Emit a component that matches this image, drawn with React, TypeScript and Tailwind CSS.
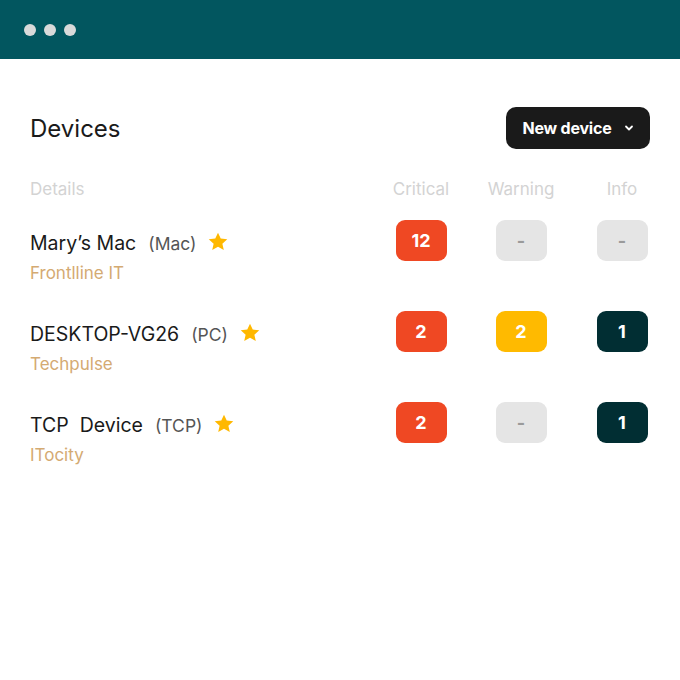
import React from "react";

type Cell = { v: string; kind: "red" | "yellow" | "dark" | "empty" };

const rows: { name: string; type: string; company: string; cells: Cell[] }[] = [
  {
    name: "Mary’s Mac",
    type: "(Mac)",
    company: "Frontlline IT",
    cells: [
      { v: "12", kind: "red" },
      { v: "-", kind: "empty" },
      { v: "-", kind: "empty" },
    ],
  },
  {
    name: "DESKTOP-VG26",
    type: "(PC)",
    company: "Techpulse",
    cells: [
      { v: "2", kind: "red" },
      { v: "2", kind: "yellow" },
      { v: "1", kind: "dark" },
    ],
  },
  {
    name: "TCP  Device",
    type: "(TCP)",
    company: "ITocity",
    cells: [
      { v: "2", kind: "red" },
      { v: "-", kind: "empty" },
      { v: "1", kind: "dark" },
    ],
  },
];

const colW = ["w-[98px]", "w-[102px]", "w-[100px]"];

function Badge({ c }: { c: Cell }) {
  const cls =
    c.kind === "red"
      ? "bg-[#EF4823] text-white"
      : c.kind === "yellow"
      ? "bg-[#FFBA00] text-white"
      : c.kind === "dark"
      ? "bg-[#012E33] text-white"
      : "bg-[#E5E5E5] text-[#9a9a9a]";
  return (
    <div
      className={`w-[51px] h-[41px] rounded-[9px] flex items-center justify-center text-[18px] font-bold ${cls}`}
    >
      {c.v}
    </div>
  );
}

function Star() {
  return (
    <svg width="20" height="19" viewBox="0 0 24 23" className="ml-[12px] mb-[3px]">
      <path
        d="M12 0.8l3.3 7.2 7.9 0.8-5.9 5.3 1.7 7.8L12 17.9l-7 4 1.7-7.8L0.8 8.8l7.9-0.8z"
        fill="#FFB800"
      />
    </svg>
  );
}

export default function App() {
  return (
    <div
      className="w-[680px] h-[680px] bg-white overflow-hidden"
      style={{ fontFamily: "Inter, 'Noto Sans', sans-serif" }}
    >
      <div className="h-[59px] bg-[#02565F] flex items-center pl-[24px] gap-[8px]">
        <div className="w-[12px] h-[12px] rounded-full bg-[#DADADA]" />
        <div className="w-[12px] h-[12px] rounded-full bg-[#DADADA]" />
        <div className="w-[12px] h-[12px] rounded-full bg-[#DADADA]" />
      </div>
      <div className="pl-[30px] pr-[30px] pt-[48px]">
        <div className="flex items-center justify-between">
          <div className="text-[24px] text-[#1a1a1a] pt-[1px]">Devices</div>
          <div className="w-[144px] h-[42px] rounded-[10px] bg-[#1A1A1A] text-white flex items-center justify-center gap-[12px] text-[16px] font-bold tracking-[-0.2px]">
            <span>New device</span>
            <svg width="10" height="8" viewBox="0 0 10 8">
              <path d="M2 2.5l3 3 3-3" stroke="white" strokeWidth="1.8" fill="none" strokeLinecap="round" strokeLinejoin="round" />
            </svg>
          </div>
        </div>
      </div>
      <div className="pl-[30px] pr-[8px] mt-[29px]">
        <div className="flex items-center h-[20px] pt-[3px] text-[17px] text-[#D3D3D3]">
          <div className="flex-1">Details</div>
          <div className={`${colW[0]} text-center`}>Critical</div>
          <div className={`${colW[1]} text-center`}>Warning</div>
          <div className={`${colW[2]} text-center`}>Info</div>
        </div>
        <div className="mt-[22px] flex flex-col gap-[28px]">
          {rows.map((r, i) => (
            <div key={i} className="flex items-start">
              <div className="flex-1">
                <div className="h-[41px] flex items-center pt-[5px]">
                  <span className="leading-[24px] whitespace-pre">
                    <span className="text-[19.5px] text-[#1a1a1a]">{r.name}</span>
                    <span className="ml-[12px] text-[17.5px] text-[#555]">{r.type}</span>
                  </span>
                  <Star />
                </div>
                <div className="h-[22px] pt-[3px] flex items-center text-[17px] text-[#D4AA72]">{r.company}</div>
              </div>
              {r.cells.map((c, j) => (
                <div key={j} className={`${colW[j]} flex justify-center`}>
                  <Badge c={c} />
                </div>
              ))}
            </div>
          ))}
        </div>
      </div>
    </div>
  );
}
